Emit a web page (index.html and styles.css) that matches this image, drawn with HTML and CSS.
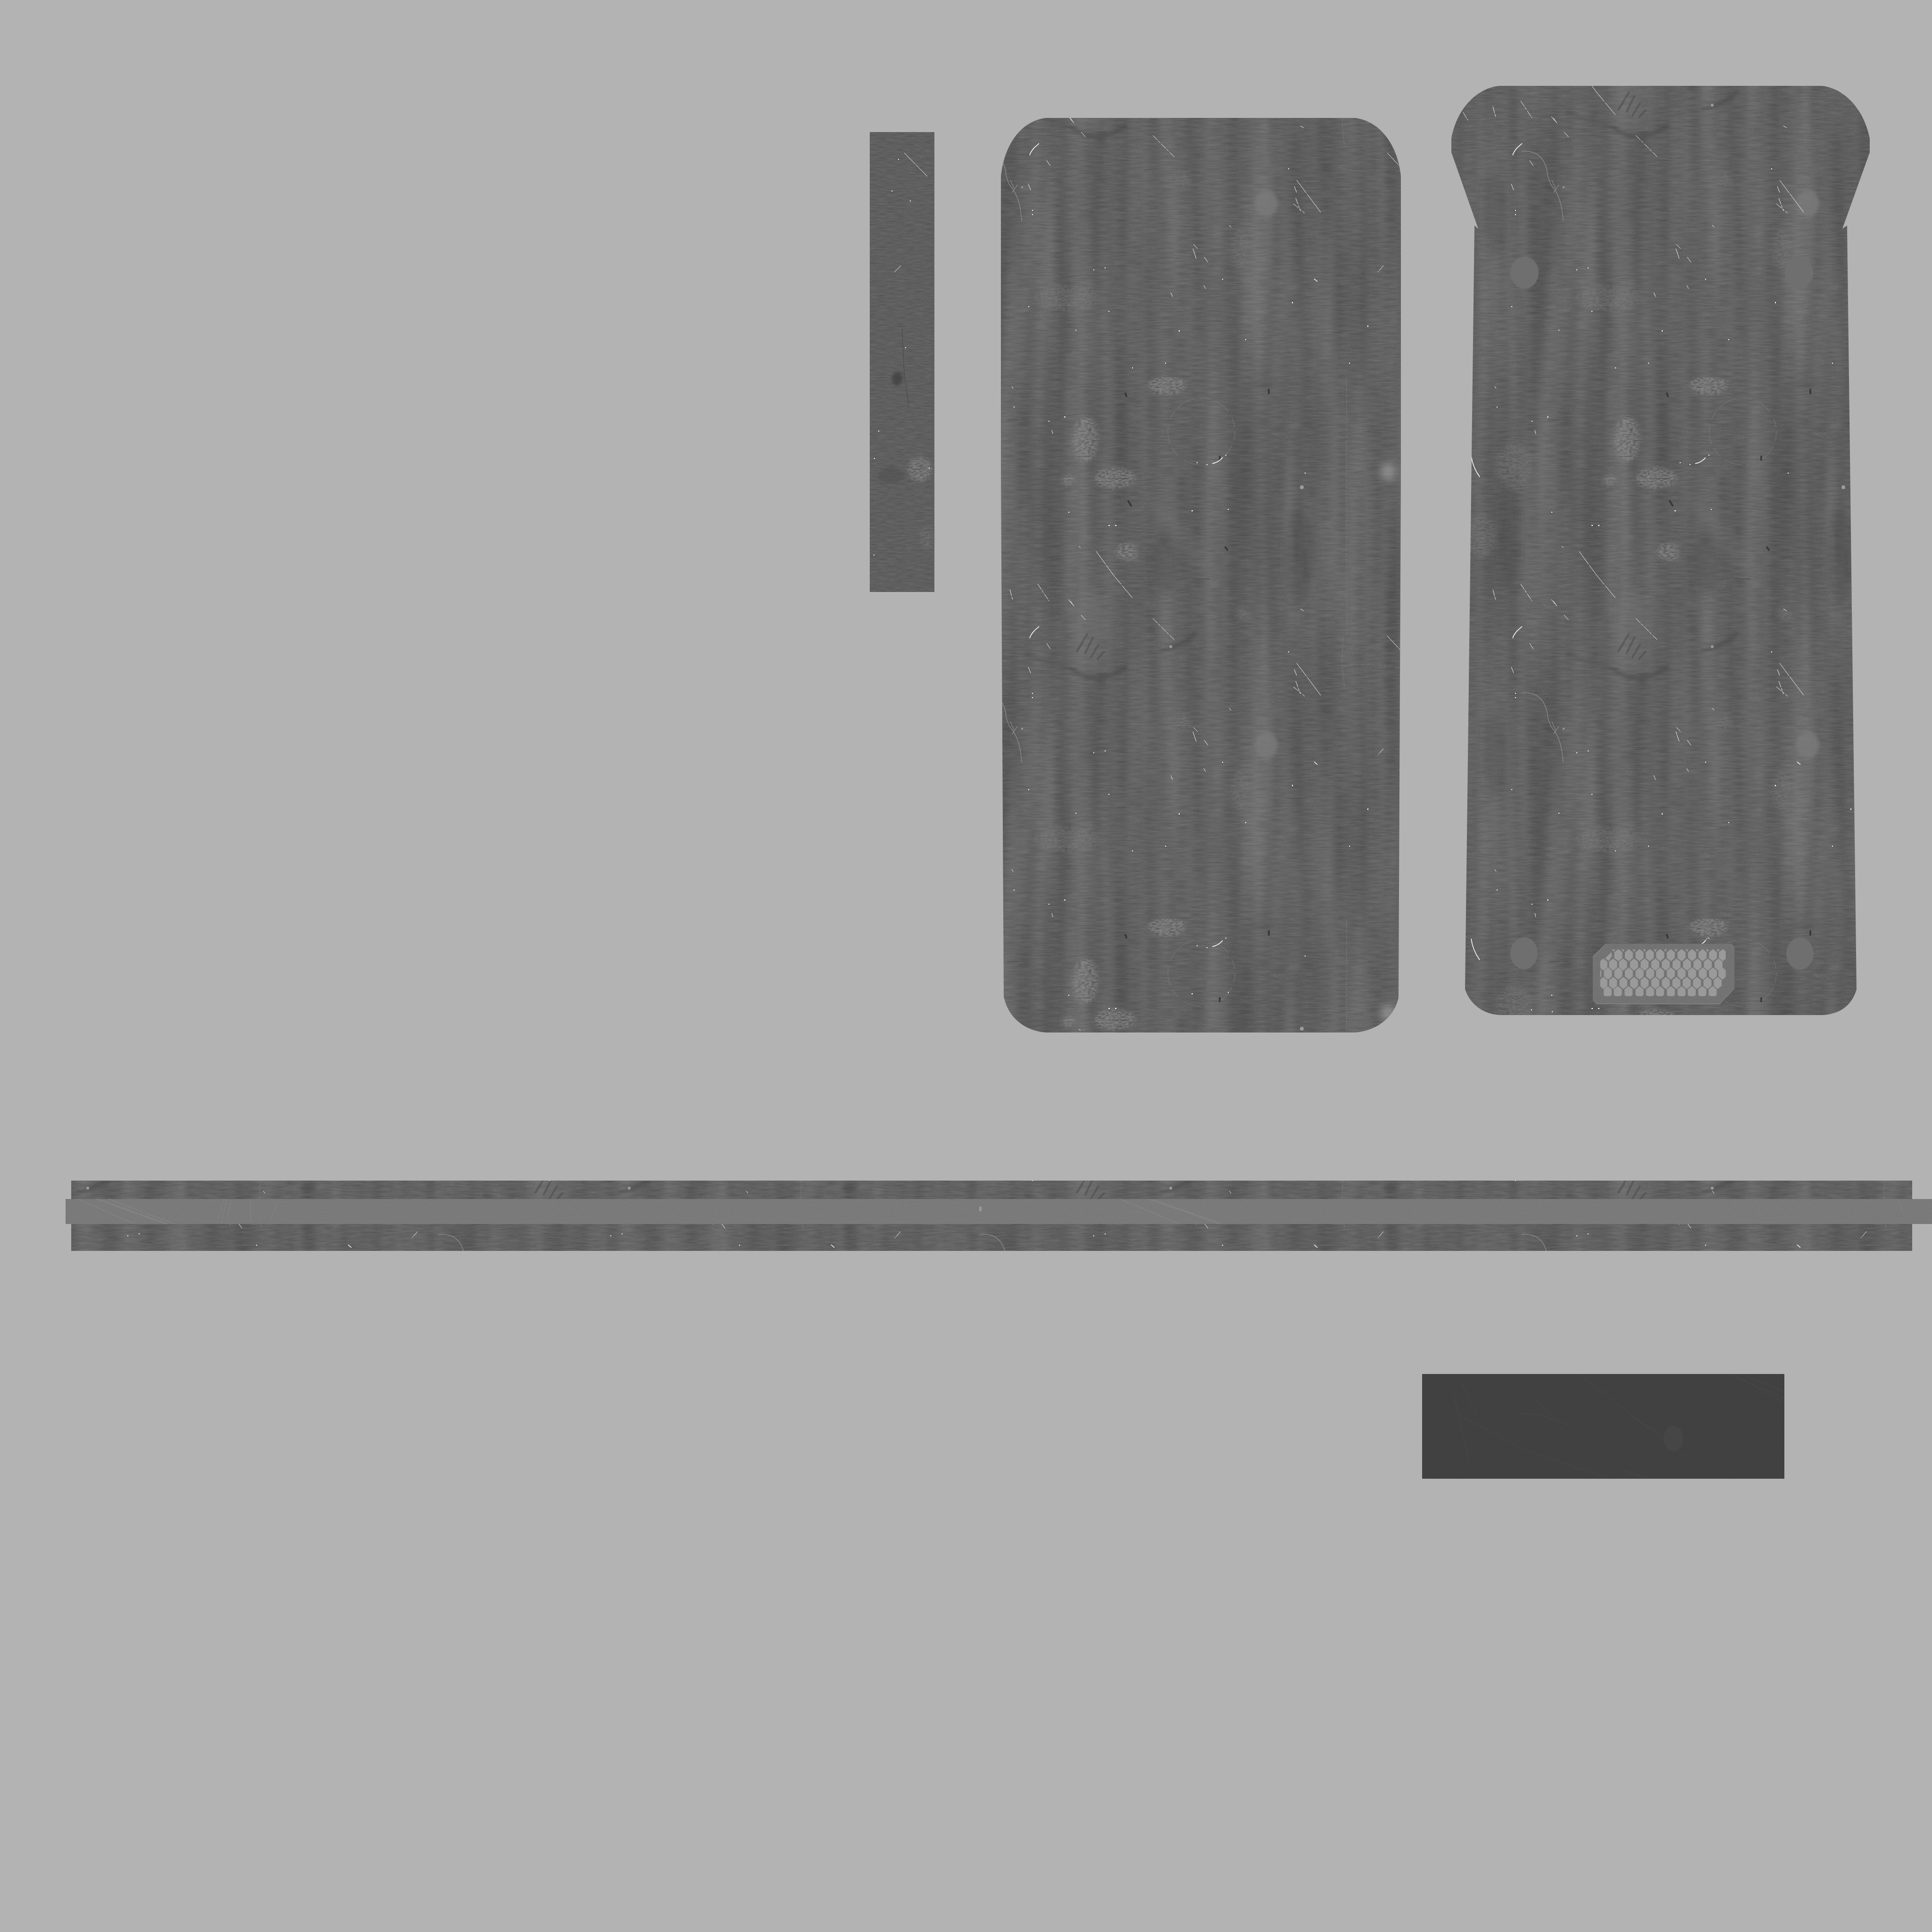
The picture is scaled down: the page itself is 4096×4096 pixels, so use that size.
FILE: index.html
```html
<!DOCTYPE html>
<html lang="en">
<head>
<meta charset="utf-8">
<title>Texture atlas</title>
<link rel="stylesheet" href="styles.css">
</head>
<body>
<svg class="atlas" width="4096" height="4096" viewBox="0 0 4096 4096" xmlns="http://www.w3.org/2000/svg">
  <defs>
    <filter id="grain" filterUnits="userSpaceOnUse" x="0" y="0" width="1148" height="1148" color-interpolation-filters="sRGB">
      <feTurbulence type="fractalNoise" baseFrequency=".0209 .00174" numOctaves="2" seed="4" stitchTiles="stitch" result="n1"/>
      <feColorMatrix in="n1" type="matrix" values="1 0 0 0 0 1 0 0 0 0 1 0 0 0 0 0 0 0 0 1" result="g1"/>
      <feTurbulence type="fractalNoise" baseFrequency=".03 .3" numOctaves="3" seed="9" stitchTiles="stitch" result="n2"/>
      <feColorMatrix in="n2" type="matrix" values="1 0 0 0 0 1 0 0 0 0 1 0 0 0 0 0 0 0 0 1" result="g2"/>
      <feTurbulence type="fractalNoise" baseFrequency=".75 .75" numOctaves="2" seed="2" stitchTiles="stitch" result="n3"/>
      <feColorMatrix in="n3" type="matrix" values="1 0 0 0 0 1 0 0 0 0 1 0 0 0 0 0 0 0 0 1" result="g3"/>
      <feComposite in="SourceGraphic" in2="g1" operator="arithmetic" k2="1" k3=".15" k4="-.075" result="s1"/>
      <feComposite in="s1" in2="g2" operator="arithmetic" k2="1" k3=".1" k4="-.05" result="s2"/>
      <feComposite in="s2" in2="g3" operator="arithmetic" k2="1" k3=".1" k4="-.05"/>
    </filter>
    <filter id="weave" x="0" y="0" width="1" height="1" color-interpolation-filters="sRGB">
      <feTurbulence type="fractalNoise" baseFrequency=".05 .35" numOctaves="3" seed="7" result="n2"/>
      <feColorMatrix in="n2" type="matrix" values="1 0 0 0 0 1 0 0 0 0 1 0 0 0 0 0 0 0 0 1" result="g2"/>
      <feTurbulence type="fractalNoise" baseFrequency=".8 .8" numOctaves="2" seed="3" result="n3"/>
      <feColorMatrix in="n3" type="matrix" values="1 0 0 0 0 1 0 0 0 0 1 0 0 0 0 0 0 0 0 1" result="g3"/>
      <feComposite in="SourceGraphic" in2="g2" operator="arithmetic" k2="1" k3=".1" k4="-.05" result="s2"/>
      <feComposite in="s2" in2="g3" operator="arithmetic" k2="1" k3=".1" k4="-.05"/>
    </filter>
    <filter id="fine" x="0" y="0" width="1" height="1" color-interpolation-filters="sRGB">
      <feTurbulence type="fractalNoise" baseFrequency=".7 .7" numOctaves="2" seed="5" result="n3"/>
      <feColorMatrix in="n3" type="matrix" values="1 0 0 0 0 1 0 0 0 0 1 0 0 0 0 0 0 0 0 1" result="g3"/>
      <feComposite in="SourceGraphic" in2="g3" operator="arithmetic" k2="1" k3=".09" k4="-.045"/>
    </filter>
    <filter id="finest" x="0" y="0" width="1" height="1" color-interpolation-filters="sRGB">
      <feTurbulence type="fractalNoise" baseFrequency=".7 .7" numOctaves="2" seed="6" result="n3"/>
      <feColorMatrix in="n3" type="matrix" values="1 0 0 0 0 1 0 0 0 0 1 0 0 0 0 0 0 0 0 1" result="g3"/>
      <feComposite in="SourceGraphic" in2="g3" operator="arithmetic" k2="1" k3=".025" k4="-.0125"/>
    </filter>
    <filter id="fur" x="-15%" y="-15%" width="130%" height="130%" color-interpolation-filters="sRGB">
      <feGaussianBlur in="SourceGraphic" stdDeviation="4" result="b"/>
      <feTurbulence type="fractalNoise" baseFrequency=".14 .3" numOctaves="3" seed="11" result="n"/>
      <feColorMatrix in="n" type="matrix" values="0 0 0 0 1 0 0 0 0 1 0 0 0 0 1 3 0 0 0 -.9" result="m"/>
      <feComposite in="b" in2="m" operator="in"/>
    </filter>
    <filter id="soft" x="-40%" y="-40%" width="180%" height="180%">
      <feGaussianBlur stdDeviation="3"/>
    </filter>
    <filter id="softer" x="-50%" y="-50%" width="200%" height="200%">
      <feGaussianBlur stdDeviation="9"/>
    </filter>

    <pattern id="grime" patternUnits="userSpaceOnUse" x="2120" y="800" width="1148" height="1148">
      <rect x="0" y="0" width="1148" height="1148" fill="#626262" filter="url(#grain)"/>
      <g transform="translate(-2120 -800)">
        <g filter="url(#softer)">
          <ellipse class="glow" cx="2312" cy="1340" rx="36" ry="90"/>
          <path class="glow-line" d="M2445 1065L2560 1205"/>
          <ellipse class="shade" cx="2755" cy="1180" rx="32" ry="100"/>
          <ellipse class="shade" cx="2470" cy="1190" rx="26" ry="70"/>
          <ellipse class="shade" cx="3170" cy="1600" rx="24" ry="90"/>
          <ellipse class="shade" cx="3200" cy="1130" rx="20" ry="120"/>
        </g>

        <g filter="url(#soft)">
          <path class="dark-arc" d="M2268 1417Q2328 1458 2389 1414"/>
          <path class="dark-arc" d="M2460 1381Q2510 1368 2537 1340"/>
          <path class="dark-arc thin" d="M2175 1385Q2240 1412 2268 1417"/>
          <path class="dark-arc thin" d="M2635 814H2723"/>
          <path class="dark-arc thin" d="M2745 1118L2750 1190M2765 1165L2770 1233"/>
        </g>
        <path class="hatch" d="M2306 1343L2285 1376M2318 1350L2300 1386M2330 1365L2312 1395M2342 1380L2326 1398M2296 1362L2282 1382"/>
        <path class="line-dark" d="M2529 1227H2564M2135 890H2160"/>
        <path class="spot" d="M2386 834L2388 840M2690 826V834M2392 1062L2398 1072M2586 968V975M2598 1160L2602 1166"/>

        <ellipse class="scuff" cx="2301" cy="932" rx="27" ry="49" filter="url(#fur)"/>
        <ellipse class="scuff" cx="2364" cy="1014" rx="44" ry="22" filter="url(#fur)"/>
        <ellipse class="scuff" cx="2264" cy="1018" rx="14" ry="11" filter="url(#fur)"/>
        <ellipse class="scuff" cx="2389" cy="1170" rx="25" ry="19" filter="url(#fur)"/>
        <ellipse class="scuff" cx="2474" cy="817" rx="41" ry="21" filter="url(#fur)"/>
        <ellipse class="scuff-smooth" cx="2685" cy="1579" rx="24" ry="29" filter="url(#soft)"/>
        <ellipse class="scuff-faint" cx="2633" cy="1299" rx="14" ry="15" filter="url(#fur)"/>
        <ellipse class="scuff-faint" cx="2509" cy="1532" rx="16" ry="18" filter="url(#fur)"/>
        <ellipse class="scuff-faint" cx="2628" cy="1675" rx="15" ry="45" filter="url(#fur)"/>
        <ellipse class="scuff-faint" cx="2262" cy="1780" rx="68" ry="26" filter="url(#fur)"/>
        <ellipse class="scuff-faint" cx="3210" cy="989" rx="38" ry="50" filter="url(#fur)"/>
        <ellipse class="scuff-faint" cx="3138" cy="1135" rx="36" ry="42" filter="url(#fur)"/>
        <ellipse class="bloom" cx="2943" cy="1000" rx="16" ry="18" filter="url(#softer)"/>

        <circle class="ring" cx="2547" cy="915" r="71"/>
        <path class="ring" d="M2700 918Q2712 930 2730 926"/>
        <path class="rough" d="M2855 800V1345M2848 1350Q2842 1400 2851 1460M2848 1412Q2900 1405 2965 1415"/>
        <path class="fibre" d="M3226 1469Q3270 1465 3280 1510Q3282 1535 3296 1550Q3312 1575 3314 1617"/>
        <path class="fibre" d="M2078 1469Q2122 1465 2132 1510Q2134 1535 2148 1550Q2164 1575 2166 1617"/>
        <path class="fibre" d="M2142 1530L2150 1548M2157 1540L2146 1556"/>
        <circle class="bead" cx="2760" cy="1033" r="4"/>
        <circle class="bead" cx="2482" cy="1371" r="3"/>
        <circle class="bead" cx="2167" cy="1545" r="2"/>
      </g>
    </pattern>

    <pattern id="scratches" patternUnits="userSpaceOnUse" x="0" y="0" width="1024" height="1024">
      <g transform="translate(-2048 0)">
        <path class="scratch" d="M2269 250L2277 261M2292 280L2302 291M2219 340L2227 352M2180 390L2186 405M2462 305L2490 333M2757 267L2764 271M2744 395L2749 408M2742 432L2766 452M2747 420L2757 447M2606 477L2610 482M2530 518L2539 527M2553 545L2561 556M2933 563L2921 577M2552 605L2556 612M2482 620L2486 629M2145 819L2148 824M2230 912L2232 920M2265 247L2276 260M2141 226L2147 248M2200 214L2224 250M2078 238L2088 255M2444 287L2462 305M2287 134L2291 137"/>
        <path class="scratch long" d="M2749 382L2800 450M2941 324L2968 353M2529 527L2536 548M2324 145L2362 197L2402 245"/>
        <path class="scratch bold" d="M2203 304L2192 314Q2185 322 2183 329M2786 591L2793 597M2570 983Q2584 980 2592 970M2095 966Q2098 990 2113 1011"/>
        <path class="dots" d="M2189 445v2M2189 454v2M2731 358h2M2318 572h2M2342 568h2M2591 592h2M2256 884h3M2223 893h2M2149 863h2M2558 985h2M2537 981h2M2766 1003h2M2603 56h2M2526 59h3M2265 62h2M2350 90h3M2364 90h3M2598 965h2M2400 780h2M2280 700h2M2500 700v3M2640 720h2M2900 690v3M2180 650h2M2740 640v3M2470 770h2M2860 770h2M2350 660h2"/>
      </g>
    </pattern>

    <path id="panel-a" d="M2218 250H2872C2920 255 2962 300 2970 373V1000L2965 2115C2955 2160 2915 2186 2872 2189H2218C2175 2186 2138 2160 2128 2113L2122 1000V373C2130 300 2170 255 2218 250Z"/>
    <path id="panel-b" d="M3179 182H3862C3905 186 3950 225 3964 293V323L3906 485L3916 478L3936 2098C3927 2128 3905 2150 3863 2152H3180C3140 2150 3115 2125 3106 2097L3126 478L3134 485L3077 323V293C3090 225 3135 186 3179 182Z"/>
    <path id="hex" d="M0-38L25-18V18L0 38L-25 18V-18Z"/>
    <path id="tri" d="M-9 69H9L0 83Z"/>
    <clipPath id="grille-clip"><rect x="68" y="66" width="798" height="300"/></clipPath>
  </defs>

  <!-- narrow strip -->
  <rect class="strip" x="1844" y="280" width="137" height="975" filter="url(#weave)"/>
  <g filter="url(#soft)">
    <ellipse class="strip-dark" cx="1902" cy="803" rx="11" ry="14"/>
    <ellipse class="strip-shade" cx="1890" cy="1008" rx="28" ry="18"/>
  </g>
  <ellipse class="scuff" cx="1950" cy="995" rx="26" ry="26" filter="url(#fur)"/>
  <ellipse class="scuff-faint" cx="1965" cy="1140" rx="15" ry="26" filter="url(#fur)"/>
  <path class="line-dark" d="M1912 693L1917 790L1927 865"/>
  <path class="scratch long" d="M1917 324L1966 374M1896 577L1910 563"/>
  <path class="dots" d="M1929 426h2M1919 737h2M1853 972h2M1969 993h2M1852 1177h2M1862 914h2M1904 338h2M1890 405h2"/>

  <!-- panels -->
  <use href="#panel-a" fill="url(#grime)"/>
  <use href="#panel-a" fill="url(#scratches)"/>
  <use href="#panel-b" fill="url(#grime)"/>
  <use href="#panel-b" fill="url(#scratches)"/>

  <ellipse class="pad" cx="3232" cy="578" rx="30" ry="34"/>
  <ellipse class="pad" cx="3814" cy="578" rx="30" ry="34"/>
  <ellipse class="pad" cx="3231" cy="2021" rx="29" ry="34"/>
  <ellipse class="pad" cx="3816" cy="2022" rx="29" ry="34"/>

  <g transform="translate(3370 1990) scale(.33333)">
    <path class="plate" d="M105 32H905L922 50V315L828 415H40L20 395V115Z" filter="url(#fine)"/>
    <path class="plate-edge" d="M20 115L105 32M40 415H828L922 315"/>
    <g class="holes" clip-path="url(#grille-clip)">
      <path class="hole-part" d="M100 125L138 86L142 110L122 142Z"/>
      <use href="#tri" x="153"/><use href="#tri" x="213"/><use href="#tri" x="283"/><use href="#tri" x="349"/><use href="#tri" x="418"/><use href="#tri" x="483"/><use href="#tri" x="550"/><use href="#tri" x="620"/><use href="#tri" x="685"/><use href="#tri" x="750"/><use href="#tri" x="818"/>
      <use href="#hex" x="183" y="105"/><use href="#hex" x="250" y="105"/><use href="#hex" x="318" y="105"/><use href="#hex" x="383" y="105"/><use href="#hex" x="449" y="105"/><use href="#hex" x="517" y="105"/><use href="#hex" x="585" y="105"/><use href="#hex" x="652" y="105"/><use href="#hex" x="719" y="105"/><use href="#hex" x="785" y="105"/><use href="#hex" x="848" y="105"/>
      <use href="#hex" x="88" y="165"/><use href="#hex" x="150" y="165"/><use href="#hex" x="213" y="165"/><use href="#hex" x="283" y="165"/><use href="#hex" x="350" y="165"/><use href="#hex" x="418" y="165"/><use href="#hex" x="485" y="165"/><use href="#hex" x="553" y="165"/><use href="#hex" x="620" y="165"/><use href="#hex" x="686" y="165"/><use href="#hex" x="752" y="165"/><use href="#hex" x="820" y="165"/>
      <use href="#hex" x="50" y="222"/><use href="#hex" x="117" y="222"/><use href="#hex" x="183" y="222"/><use href="#hex" x="250" y="222"/><use href="#hex" x="318" y="222"/><use href="#hex" x="385" y="222"/><use href="#hex" x="448" y="222"/><use href="#hex" x="517" y="222"/><use href="#hex" x="585" y="222"/><use href="#hex" x="652" y="222"/><use href="#hex" x="720" y="222"/><use href="#hex" x="785" y="222"/><use href="#hex" x="845" y="222"/>
      <use href="#hex" x="88" y="282"/><use href="#hex" x="150" y="282"/><use href="#hex" x="215" y="282"/><use href="#hex" x="283" y="282"/><use href="#hex" x="350" y="282"/><use href="#hex" x="418" y="282"/><use href="#hex" x="485" y="282"/><use href="#hex" x="552" y="282"/><use href="#hex" x="618" y="282"/><use href="#hex" x="683" y="282"/><use href="#hex" x="750" y="282"/><use href="#hex" x="815" y="282"/>
      <use href="#hex" x="115" y="340"/><use href="#hex" x="180" y="340"/><use href="#hex" x="248" y="340"/><use href="#hex" x="318" y="340"/><use href="#hex" x="385" y="340"/><use href="#hex" x="448" y="340"/><use href="#hex" x="517" y="340"/><use href="#hex" x="585" y="340"/><use href="#hex" x="650" y="340"/><use href="#hex" x="717" y="340"/><use href="#hex" x="783" y="340"/>
    </g>
  </g>
  <path class="dots" d="M3290 2145h2M3247 2140v2"/>
  <path class="scratch" d="M3612 1998L3620 1988"/>

  <!-- long band -->
  <rect x="151" y="2503" width="3903" height="149" fill="url(#grime)"/>
  <rect x="151" y="2503" width="3903" height="149" fill="url(#scratches)"/>
  <rect class="rail" x="139" y="2542" width="3957" height="53" filter="url(#fine)"/>
  <path class="rail-line" d="M203 2542L350 2595M210 2542L356 2595M165 2542L285 2595M2435 2542L2586 2595M2442 2542L2592 2595M2375 2542L2500 2595M230 2542L370 2595"/>
  <path class="rail-faint" d="M275 2555L275 2565M475 2542L460 2595M480 2542L470 2595M490 2545L478 2595M530 2542L532 2590M590 2545L570 2595M4025 2543L4035 2570M2400 2570L2415 2569"/>
  <rect class="rail-chip" x="2076" y="2558" width="5" height="10"/>

  <!-- dark block -->
  <rect class="block" x="3015" y="2913" width="768" height="222" filter="url(#finest)"/>
  <path class="block-line" d="M3095 3002L3240 3077L3414 3135M3350 2915L3591 3103M3082 2957L3114 3097M3224 2997L3264 2999L3326 3022M3462 3005L3532 3047M3441 3117L3494 3135M3666 2913L3783 2965M3690 2913L3783 2950M3675 2913L3783 2975M3250 2960L3300 3010M3095 2925L3130 3000"/>
  <ellipse class="block-blob" cx="3548" cy="3050" rx="21" ry="27"/>
</svg>
</body>
</html>
```

FILE: styles.css
```css
html, body {
  margin: 0;
  padding: 0;
  background: #b3b3b3;
}

.atlas {
  display: block;
}

.strip { fill: #5f5f5f; }
.strip-dark { fill: #3c3c3c; opacity: .7; }
.strip-shade { fill: #4a4a4a; opacity: .4; }

.glow { fill: #7a7a7a; opacity: .3; }
.glow-line { fill: none; stroke: #7a7a7a; stroke-width: 40; opacity: .18; }
.shade { fill: #444; opacity: .28; }

.dark-arc { fill: none; stroke: #3f3f3f; stroke-width: 8; opacity: .45; }
.dark-arc.thin { stroke-width: 4; opacity: .35; }
.hatch { fill: none; stroke: #484848; stroke-width: 4; opacity: .5; }
.line-dark { fill: none; stroke: #444; stroke-width: 1.5; opacity: .6; }
.spot { fill: none; stroke: #2f2f2f; stroke-width: 4; stroke-linecap: round; opacity: .8; }

.scuff { fill: #929292; opacity: .6; }
.scuff-smooth { fill: #7a7a7a; opacity: .75; }
.scuff-faint { fill: #888; opacity: .3; }
.bloom { fill: #a0a0a0; opacity: .7; }

.ring { fill: none; stroke: #7e7e7e; stroke-width: 1.5; stroke-dasharray: 22 7 40 14; opacity: .5; }
.rough { fill: none; stroke: #7e7e7e; stroke-width: 1.5; stroke-dasharray: 9 3; opacity: .5; }
.fibre { fill: none; stroke: #8c8c8c; stroke-width: 1.5; opacity: .85; }
.bead { fill: #9c9c9c; }

.scratch { fill: none; stroke: #fff; stroke-width: 1; stroke-dasharray: 14 2 6 3; opacity: .9; }
.scratch.long { stroke-dasharray: 34 2 52 3; }
.scratch.bold { stroke-width: 1.6; stroke-dasharray: none; opacity: 1; }
.dots { fill: none; stroke: #fff; stroke-width: 2; }

.pad { fill: #6f6f6f; }

.plate { fill: #737373; }
.plate-edge { fill: none; stroke: #9e9e9e; stroke-width: 2.5; }
.holes { fill: #9a9a9a; stroke: #9a9a9a; stroke-width: 1; stroke-linejoin: round; }
.hole-part { fill: #9a9a9a; }

.rail { fill: #7a7a7a; }
.rail-line { fill: none; stroke: #8a8a8a; stroke-width: 1; }
.rail-faint { fill: none; stroke: #848484; stroke-width: 1; }
.rail-chip { fill: #999; }

.block { fill: #414141; }
.block-line { fill: none; stroke: #4a4a4a; stroke-width: 1; }
.block-blob { fill: #494949; opacity: .7; }
```
